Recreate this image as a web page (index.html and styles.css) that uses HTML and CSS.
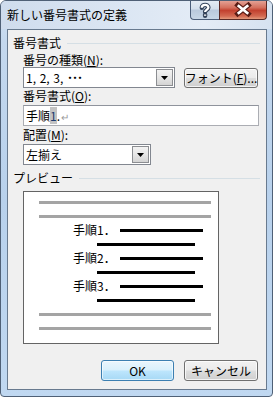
FILE: index.html
```html
<!DOCTYPE html>
<html lang="ja">
<head>
<meta charset="utf-8">
<link rel="stylesheet" href="styles.css">
</head>
<body>
<div class="window">
  <div class="titlebar">
    <span class="title">新しい番号書式の定義</span>
    <div class="caption-btns">
      <div class="cap-btn help">
        <svg width="29" height="20" viewBox="0 0 29 20">
          <path d="M11.2 7.6 C11.2 3.8 18 3.8 18 7.4 C18 9.6 14.6 9.6 14.6 12.2 M14.6 14.6 L14.6 16" fill="none" stroke="#33435a" stroke-width="4.6" stroke-linecap="round"/>
          <path d="M11.2 7.6 C11.2 3.8 18 3.8 18 7.4 C18 9.6 14.6 9.6 14.6 12.2 M14.6 14.6 L14.6 16" fill="none" stroke="#ffffff" stroke-width="2.4" stroke-linecap="butt"/>
        </svg>
      </div>
      <div class="cap-btn close">
        <svg width="48" height="20" viewBox="0 0 48 20">
          <path d="M18.5 5 L29.5 14 M29.5 5 L18.5 14" fill="none" stroke="#5a1d16" stroke-width="5.2" stroke-linecap="square"/>
          <path d="M18.5 5 L29.5 14 M29.5 5 L18.5 14" fill="none" stroke="#ffffff" stroke-width="2.8" stroke-linecap="butt"/>
        </svg>
      </div>
    </div>
  </div>
  <div class="client">
    <div class="group-head"><span class="group-title">番号書式</span><span class="rule"></span></div>
    <div class="group-body">
      <div class="label lbl-first">番号の種類(<u>N</u>):</div>
      <div class="row">
        <div class="combo combo-wide">
          <span class="val">1, 2, 3, <span class="dots">･･･</span></span>
          <span class="drop"><svg width="7" height="4" viewBox="0 0 7 4"><path d="M0 0 H7 L3.5 4 Z" fill="#000"/></svg></span>
        </div>
        <div class="button font-btn">フォント(<u>F</u>)...</div>
      </div>
      <div class="label lbl-second">番号書式(<u>O</u>):</div>
      <div class="textbox">手順<span class="sel">1</span>.<span class="ret">↵</span></div>
      <div class="label lbl-third">配置(<u>M</u>):</div>
      <div class="combo combo-narrow">
        <span class="val">左揃え</span>
        <span class="drop"><svg width="7" height="4" viewBox="0 0 7 4"><path d="M0 0 H7 L3.5 4 Z" fill="#000"/></svg></span>
      </div>
    </div>
    <div class="group-head preview-head"><span class="group-title">プレビュー</span><span class="rule"></span></div>
    <div class="preview">
      <div class="prow"><span class="gbar"></span></div>
      <div class="prow"><span class="gbar"></span></div>
      <div class="prow"><span class="ptext">手順1．</span><span class="bbar b1"></span></div>
      <div class="prow"><span class="bbar b2"></span></div>
      <div class="prow"><span class="ptext">手順2．</span><span class="bbar b1"></span></div>
      <div class="prow"><span class="bbar b2"></span></div>
      <div class="prow"><span class="ptext">手順3．</span><span class="bbar b1"></span></div>
      <div class="prow"><span class="bbar b2"></span></div>
      <div class="prow"><span class="gbar"></span></div>
      <div class="prow"><span class="gbar"></span></div>
    </div>
    <div class="actions">
      <div class="button default">OK</div>
      <div class="button">キャンセル</div>
    </div>
  </div>
</div>
</body>
</html>
```

FILE: styles.css
```css
* { box-sizing: border-box; }
html, body { margin: 0; padding: 0; }
body {
  width: 273px;
  height: 397px;
  background: #ffffff;
  font-family: "Noto Sans CJK JP", "Noto Sans", sans-serif;
  font-size: 12px;
  color: #000;
  overflow: hidden;
}
u { text-decoration: underline; text-underline-offset: 1px; }

.window {
  width: 273px;
  height: 397px;
  border: 1px solid #4f6076;
  border-radius: 6px 6px 4px 4px;
  background: linear-gradient(to bottom, #d3e1f1 0px, #c4d8ee 40px, #b8d1ec 200px, #c0d8f1 397px);
  display: flex;
  flex-direction: column;
  overflow: hidden;
}

.titlebar {
  height: 28px;
  display: flex;
  justify-content: space-between;
  align-items: flex-start;
  background: linear-gradient(to right, #cfdced 0%, #dbe6f3 45%, #e4ecf6 75%, #d6e2f0 100%);
}
.title {
  padding: 7px 0 0 6px;
  line-height: 14px;
  font-size: 12px;
  color: #000;
}
.caption-btns {
  display: flex;
  margin-top: -1px;
  margin-right: 5px;
}
.cap-btn {
  height: 20px;
  border: 1px solid #4a5d78;
  border-top: none;
  display: flex;
}
.cap-btn svg { display: block; }
.help {
  width: 29px;
  border-radius: 0 0 0 4px;
  border-right: none;
  background: linear-gradient(to bottom, #e6edf5 0%, #d5e0ec 45%, #b9c9dc 55%, #c7d6e6 100%);
}
.close {
  width: 48px;
  border-radius: 0 0 4px 0;
  border-color: #5a2a26;
  background: linear-gradient(to bottom, #e6a89c 0%, #d4705e 40%, #c2412f 55%, #d36a52 85%, #e39a7d 100%);
}

.client {
  margin: 0 5px 0 6px;
  height: 361px;
  border: 1px solid #687a8f;
  background: #f0f0f0;
  display: flex;
  flex-direction: column;
}

.group-head {
  margin-top: 6px;
  padding-left: 5px;
  height: 14px;
  display: flex;
  align-items: center;
  line-height: 14px;
}
.group-title { white-space: nowrap; }
.rule {
  flex: 1;
  height: 1px;
  margin: 0 6px 0 6px;
  background: #d5dfe5;
}

.group-body {
  padding-left: 15px;
  display: flex;
  flex-direction: column;
}
.label { line-height: 14px; height: 14px; }
.lbl-first { margin-top: 3px; }
.lbl-second { margin-top: 1px; }
.lbl-third { margin-top: 2px; }

.row {
  display: flex;
  align-items: center;
  gap: 9px;
}

.combo {
  height: 21px;
  border: 1px solid #828790;
  background: #fff;
  display: flex;
  align-items: stretch;
}
.combo-wide { width: 152px; }
.combo-narrow { width: 128px; margin-top: 2px; }
.combo .val {
  flex: 1;
  padding-left: 2px;
  line-height: 19px;
  white-space: nowrap;
  word-spacing: 1px;
}
.dots { letter-spacing: -1px; font-weight: bold; }
.drop {
  width: 17px;
  margin: 1px;
  border: 1px solid #8c8e92;
  background: linear-gradient(to bottom, #f3f3f3 0%, #e6e6e6 50%, #d4d4d4 100%);
  display: flex;
  align-items: center;
  justify-content: center;
}
.drop svg { display: block; }

.button {
  height: 21px;
  border: 1px solid #707070;
  border-radius: 3px;
  background: linear-gradient(to bottom, #f2f2f2 0%, #ebebeb 49%, #dddddd 51%, #cfcfcf 100%);
  box-shadow: inset 0 0 0 1px rgba(255,255,255,0.75);
  display: flex;
  align-items: center;
  justify-content: center;
  line-height: 14px;
  white-space: nowrap;
}
.font-btn { width: 74px; height: 20px; }

.textbox {
  margin-top: 2px;
  width: 236px;
  height: 21px;
  border: 1px solid #abadb3;
  border-top-color: #8f939c;
  background: #fff;
  padding-left: 2px;
  line-height: 19px;
  white-space: nowrap;
}
.sel { background: #c3c3c3; color: #1c3a6e; }
.ret { color: #9a9a9a; font-size: 10px; margin-left: 1px; }

.preview-head { margin-top: 6px; }

.preview {
  margin: 6px 0 0 15px;
  width: 196px;
  height: 153px;
  border: 1px solid #646464;
  background: #fff;
  padding: 3px 0 8px 0;
  display: flex;
  flex-direction: column;
}
.prow {
  height: 14px;
  display: flex;
  align-items: center;
  line-height: 14px;
}
.gbar {
  margin-left: 15px;
  width: 172px;
  height: 3px;
  background: #a4a4a4;
}
.ptext {
  margin-left: 49px;
  width: 47px;
  white-space: nowrap;
}
.bbar { height: 3px; background: #000; }
.b1 { width: 83px; }
.b2 { margin-left: 73px; width: 98px; }

.actions {
  margin-top: 16px;
  padding-right: 8px;
  display: flex;
  justify-content: flex-end;
  gap: 10px;
}
.actions .button { width: 74px; }
.actions .default { width: 73px; }
.button.default {
  border-color: #3c7fb1;
  background: linear-gradient(to bottom, #eaf6fd 0%, #d9f0fc 49%, #bee6fd 51%, #a7d9f5 100%);
  box-shadow: inset 0 0 0 1px rgba(255,255,255,0.6);
}
```
